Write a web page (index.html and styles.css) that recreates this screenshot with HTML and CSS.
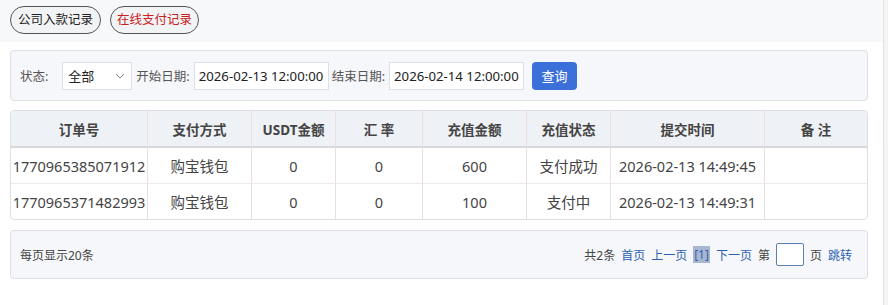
FILE: index.html
```html
<!DOCTYPE html>
<html lang="zh-CN">
<head>
<meta charset="UTF-8">
<title>在线支付记录</title>
<link rel="stylesheet" href="styles.css">
</head>
<body>
<div class="page">
    <div class="main">
        <div class="tabs">
            <a class="tab">公司入款记录</a>
            <a class="tab active">在线支付记录</a>
        </div>
        <div class="content">
            <div class="panel filter">
                <span class="label">状态:</span>
                <div class="select">
                    <span>全部</span>
                    <svg width="10" height="6" viewBox="0 0 10 6"><path d="M1 1l4 4 4-4" fill="none" stroke="#888" stroke-width="1"/></svg>
                </div>
                <span class="label">开始日期:</span>
                <div class="input">2026-02-13 12:00:00</div>
                <span class="label">结束日期:</span>
                <div class="input">2026-02-14 12:00:00</div>
                <button class="btn">查询</button>
            </div>

            <table class="grid">
                <thead>
                    <tr>
                        <th class="c1">订单号</th>
                        <th class="c2">支付方式</th>
                        <th class="c3">USDT金额</th>
                        <th class="c4">汇 率</th>
                        <th class="c5">充值金额</th>
                        <th class="c6">充值状态</th>
                        <th class="c7">提交时间</th>
                        <th class="c8">备 注</th>
                    </tr>
                </thead>
                <tbody>
                    <tr>
                        <td>1770965385071912</td>
                        <td>购宝钱包</td>
                        <td>0</td>
                        <td>0</td>
                        <td>600</td>
                        <td>支付成功</td>
                        <td>2026-02-13 14:49:45</td>
                        <td></td>
                    </tr>
                    <tr>
                        <td>1770965371482993</td>
                        <td>购宝钱包</td>
                        <td>0</td>
                        <td>0</td>
                        <td>100</td>
                        <td>支付中</td>
                        <td>2026-02-13 14:49:31</td>
                        <td></td>
                    </tr>
                </tbody>
            </table>

            <div class="panel pager">
                <span>每页显示20条</span>
                <div class="pages">
                    <span>共2条</span>
                    <a>首页</a>
                    <a>上一页</a>
                    <span class="current">[1]</span>
                    <a>下一页</a>
                    <span>第</span>
                    <span class="page-input"></span>
                    <span>页</span>
                    <a>跳转</a>
                </div>
            </div>
        </div>
    </div>
    <div class="scrollbar"></div>
</div>
</body>
</html>
```

FILE: styles.css
```css
body {
    margin: 0;
    font-family: "Noto Sans", "Noto Sans CJK SC", sans-serif;
    font-size: 13px;
    color: #333;
    background: #fff;
}
.page {
    display: flex;
    height: 305px;
}
.main {
    width: 883px;
}
.scrollbar {
    flex: 1;
    background: #f4f4f4;
    border-left: 1px solid #e4e4e4;
}
.tabs {
    display: flex;
    gap: 9px;
    height: 42px;
    padding: 6px 10px 0;
    box-sizing: border-box;
    background: #f6f8fa;
}
.tab {
    height: 28px;
    line-height: 26px;
    box-sizing: border-box;
    padding: 0 7px;
    border: 1px solid #555;
    border-radius: 14px;
    background: #f2f3f5;
    color: #222;
    font-size: 12.5px;
}
.tab.active {
    color: #c8201c;
    padding: 0 6px;
}
.content {
    padding: 8px 15px 0 10px;
}
.panel {
    display: flex;
    align-items: center;
    background: #f5f7fa;
    border: 1px solid #dcdfe3;
    border-radius: 4px;
    box-sizing: border-box;
}
.filter {
    height: 51px;
    padding: 0 9px;
}
.label {
    color: #555;
    font-size: 12.5px;
    margin-right: 4px;
}
.select,
.input {
    margin-right: 4px;
}
.select {
    width: 70px;
    height: 28px;
    box-sizing: border-box;
    margin-left: 10px;
    padding: 0 6px 0 5px;
    display: flex;
    align-items: center;
    justify-content: space-between;
    background: #fff;
    border: 1px solid #dcdfe3;
    color: #222;
}
.input {
    width: 135px;
    height: 28px;
    line-height: 26px;
    box-sizing: border-box;
    padding: 0 4px;
    background: #fff;
    border: 1px solid #dcdfe3;
    color: #222;
    font-size: 13.2px;
    white-space: nowrap;
    overflow: hidden;
}
.input + .label {
    margin-left: -1px;
}
.btn {
    margin-left: 4px;
    width: 45px;
    height: 28px;
    border: none;
    border-radius: 4px;
    background: #3b6fd9;
    color: #fff;
    font-family: inherit;
    font-size: 13px;
}
.grid {
    width: 858px;
    margin-top: 9px;
    border-collapse: separate;
    border-spacing: 0;
    border: 1px solid #dcdfe3;
    border-radius: 4px;
    overflow: hidden;
}
.grid th,
.grid td {
    height: 35px;
    padding: 0;
    text-align: center;
    border-left: 1px solid #eadfe0;
    color: #444;
}
.grid th:first-child,
.grid td:first-child {
    border-left: none;
}
.grid th {
    height: 35px;
    background: #eef1f5;
    font-weight: bold;
    font-size: 13.5px;
    color: #444;
    border-bottom: 2px solid #d8d8d8;
}
.grid td {
    font-size: 14.5px;
    border-bottom: 1px solid #eee8e8;
}
.grid tbody tr:last-child td {
    border-bottom: none;
}
.c1 { width: 136px; }
.c2 { width: 103px; }
.c3 { width: 83px; }
.c4 { width: 86px; }
.c5 { width: 103px; }
.c6 { width: 83px; }
.c7 { width: 153px; }
.pager {
    margin-top: 10px;
    height: 49px;
    padding: 0 15px 0 9px;
    justify-content: space-between;
    color: #444;
    font-size: 12px;
}
.pages {
    display: flex;
    align-items: center;
    gap: 6px;
}
.pages a {
    color: #2f5fb3;
}
.pages .current {
    background: #a9b6cf;
    color: #2f5fb3;
    padding: 0 1px;
}
.page-input {
    width: 26px;
    height: 21px;
    background: #fff;
    border: 1px solid #5a7fb5;
    border-radius: 2px;
}
```
